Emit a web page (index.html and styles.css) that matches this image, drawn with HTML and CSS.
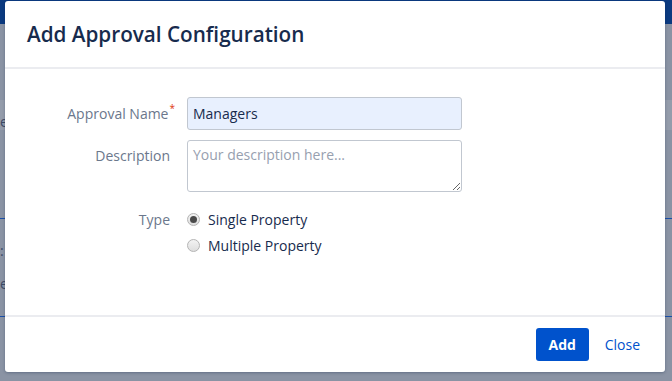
FILE: index.html
```html
<!DOCTYPE html>
<html lang="en">
<head>
  <meta charset="UTF-8" />
  <title>Add Approval Configuration</title>
  <link rel="stylesheet" href="styles.css">
</head>
<body>
  <div class="page">
    <div class="page-header"></div>
    <div class="page-band"></div>
    <div class="page-text t1">e</div>
    <div class="page-line l1"></div>
    <div class="page-text t2">:</div>
    <div class="page-text t3">e</div>
    <div class="page-line l2"></div>
  </div>

  <div class="dialog" role="dialog">
    <div class="dialog-header">
      <h2>Add Approval Configuration</h2>
    </div>
    <form class="dialog-body" id="approvalForm">
      <div class="field-row">
        <label for="approvalName">Approval Name<span class="req">*</span></label>
        <input type="text" id="approvalName" class="text-input filled" value="Managers">
      </div>
      <div class="field-row">
        <label for="description" class="top">Description</label>
        <textarea id="description" class="text-area" placeholder="Your description here..."></textarea>
      </div>
      <div class="field-row">
        <label class="top type">Type</label>
        <div class="radios">
          <label class="radio"><input type="radio" name="type" checked><span>Single Property</span></label>
          <label class="radio"><input type="radio" name="type"><span>Multiple Property</span></label>
        </div>
      </div>
    </form>
    <div class="dialog-footer">
      <button type="submit" form="approvalForm" class="btn-primary">Add</button>
      <a href="#" class="btn-link">Close</a>
    </div>
  </div>
</body>
</html>
```

FILE: styles.css
```css
html, body {
  margin: 0;
  padding: 0;
  height: 100%;
}
body {
  background: #8a93a4;
  font-family: "Segoe UI", "Open Sans", "Noto Sans", sans-serif;
  color: #172b4d;
  overflow: hidden;
}
.page {
  height: 100%;
}
.page-header {
  height: 24px;
  background: #0b3a80;
}
.page-band {
  margin-top: 76px;
  height: 30px;
  background: #949cab;
}
.page-text {
  position: absolute;
  left: 0;
  font-size: 14px;
  color: #3d4a66;
}
.t1 { top: 112px; }
.t2 { top: 241px; }
.t3 { top: 274px; }
.page-line {
  position: absolute;
  left: 0;
  right: 0;
  height: 1px;
  background: #1a4fa8;
}
.l1 { top: 218px; }
.l2 { top: 316px; }

.dialog {
  position: absolute;
  left: 5px;
  top: 1px;
  width: 660px;
  height: 371px;
  background: #fff;
  border-radius: 3px;
  box-shadow: 0 1px 3px rgba(9,30,66,0.3);
  display: flex;
  flex-direction: column;
}
.dialog-header {
  height: 66px;
  border-bottom: 2px solid #ebecf0;
  padding: 0 22px;
  display: flex;
  align-items: center;
}
.dialog-header h2 {
  margin: 0;
  font-size: 20.7px;
  font-weight: 600;
  color: #172b4d;
}
.dialog-body {
  flex: 1;
  padding: 28px 0 0;
  border-bottom: 2px solid #ebecf0;
  display: flex;
  flex-direction: column;
  gap: 10px;
}
.field-row {
  display: grid;
  grid-template-columns: 165px 275px;
  column-gap: 17px;
  align-items: center;
}
.field-row > label {
  text-align: right;
  font-size: 14px;
  color: #6b778c;
}
.field-row > label.top {
  align-self: start;
  padding-top: 6px;
}
.field-row > label.type {
  padding-top: 8px;
}
.field-row > label.top + .radios {
  padding-top: 7px;
}
.req {
  color: #de350b;
  font-size: 10px;
  vertical-align: top;
  position: relative;
  top: -3px;
  margin-right: -5px;
  margin-left: 1px;
}
.text-input, .text-area {
  box-sizing: border-box;
  width: 275px;
  border: 1px solid #c1c7d0;
  border-radius: 3px;
  font-family: inherit;
  font-size: 14px;
  color: #172b4d;
  padding: 4px 5px;
  margin: 0;
}
.text-input {
  height: 33px;
}
.text-input.filled {
  background: #e8f0fe;
}
.text-area {
  height: 52px;
  resize: vertical;
  padding-top: 4px;
}
.text-area::placeholder {
  color: #97a0af;
}
.radios {
  display: flex;
  flex-direction: column;
  gap: 6px;
}
.radio {
  display: flex;
  align-items: center;
  gap: 8px;
  font-size: 14px;
  color: #172b4d;
  height: 20px;
}
.radio input {
  appearance: none;
  -webkit-appearance: none;
  margin: 0;
  width: 13px;
  height: 13px;
  border: 1px solid #b4b4b4;
  border-radius: 50%;
  background: linear-gradient(#f3f3f3, #dedede);
  box-sizing: border-box;
  position: relative;
}
.radio input:checked::after {
  content: "";
  position: absolute;
  left: 2px;
  top: 2px;
  width: 7px;
  height: 7px;
  border-radius: 50%;
  background: #4a4a4a;
}
.dialog-footer {
  height: 55px;
  display: flex;
  align-items: center;
  justify-content: flex-end;
  padding: 0 25px 0 0;
  gap: 16px;
}
.btn-primary {
  background: #0052cc;
  color: #fff;
  border: none;
  border-radius: 3px;
  height: 33px;
  width: 53px;
  font-family: inherit;
  font-size: 14px;
  font-weight: 700;
  cursor: pointer;
}
.btn-link {
  color: #0052cc;
  text-decoration: none;
  font-size: 14px;
}
```
